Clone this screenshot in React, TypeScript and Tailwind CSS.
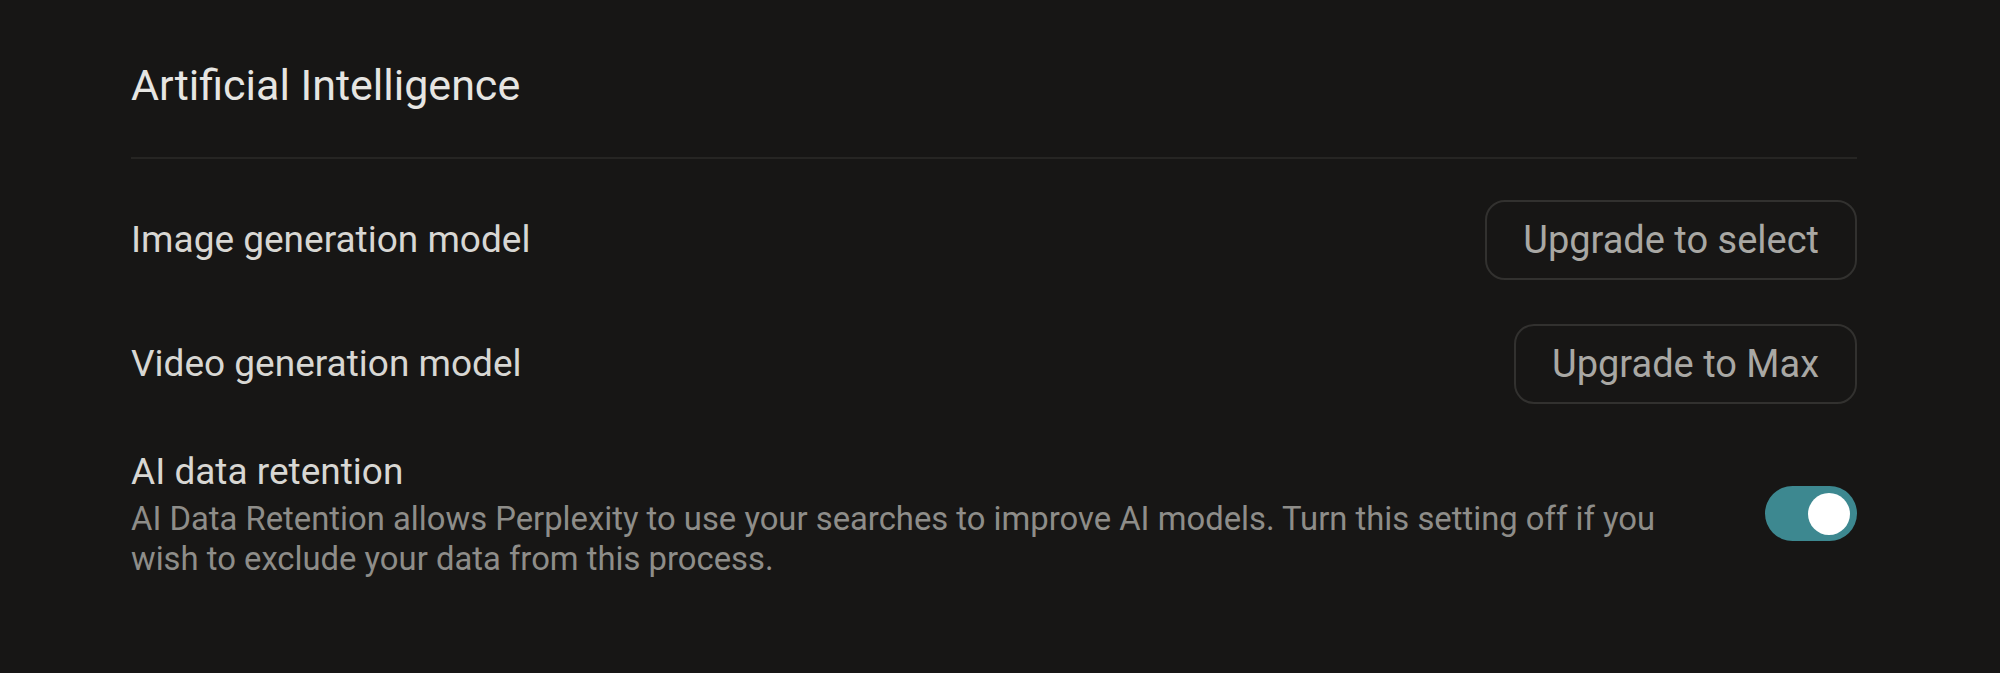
import { useState } from 'react';

function Toggle({ on, onChange }: { on: boolean; onChange: () => void }) {
  return (
    <button
      onClick={onChange}
      className={`relative flex h-[55px] w-[92px] shrink-0 items-center rounded-full px-[7px] ${
        on ? 'justify-end bg-[#3d8890]' : 'justify-start bg-[#3a3937]'
      }`}
    >
      <span className="block h-[42px] w-[42px] rounded-full bg-white" />
    </button>
  );
}

function SettingButton({ label }: { label: string }) {
  return (
    <button className="h-[80px] rounded-[20px] border-2 border-[#32312f] px-[36px] text-[38px] text-[#a9a8a4]">
      {label}
    </button>
  );
}

export default function App() {
  const [retention, setRetention] = useState(true);

  return (
    <div
      className="min-h-[673px] w-full bg-[#171615] pl-[131px] pr-[143px] pt-[59px]"
      style={{ fontFamily: 'Roboto, "Noto Sans", sans-serif' }}
    >
      <h1 className="h-[52px] text-[43px] leading-[52px] text-[#e6e5e2]">Artificial Intelligence</h1>
      <div className="mt-[46px] h-[2px] bg-[#262523]" />

      <div className="mt-[41px] flex items-center justify-between">
        <span className="text-[37px] text-[#d8d7d3]">Image generation model</span>
        <SettingButton label="Upgrade to select" />
      </div>

      <div className="mt-[44px] flex items-center justify-between">
        <span className="text-[37px] text-[#d8d7d3]">Video generation model</span>
        <SettingButton label="Upgrade to Max" />
      </div>

      <div className="mt-[44px] flex items-center justify-between">
        <div>
          <div className="text-[37px] leading-[48px] text-[#d8d7d3]">AI data retention</div>
          <p className="mt-[3px] w-[1570px] text-[32.8px] leading-[40px] text-[#8e8d89]">
            AI Data Retention allows Perplexity to use your searches to improve AI models. Turn this
            setting off if you wish to exclude your data from this process.
          </p>
        </div>
        <Toggle on={retention} onChange={() => setRetention(!retention)} />
      </div>
    </div>
  );
}
